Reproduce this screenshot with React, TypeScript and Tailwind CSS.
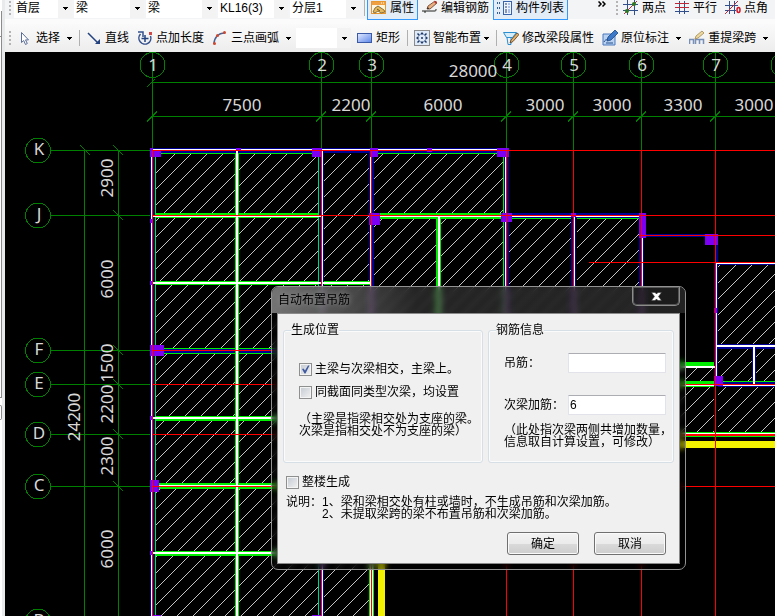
import React from "react";

const FONT = "font-['Liberation_Sans','Noto_Sans_CJK_SC',sans-serif]";

/* ---------- toolbar pieces ---------- */

function Icon({ children }: { children: React.ReactNode }) {
  return (
    <svg width="16" height="16" viewBox="0 0 16 16" fill="none" aria-hidden="true" className="shrink-0">
      {children}
    </svg>
  );
}

function Grip() {
  return (
    <span aria-hidden="true" className="flex w-[3px] shrink-0 flex-col gap-[2px]">
      <i className="h-[2px] w-[2px] bg-[#b4b4b4]" />
      <i className="h-[2px] w-[2px] bg-[#b4b4b4]" />
      <i className="h-[2px] w-[2px] bg-[#b4b4b4]" />
      <i className="h-[2px] w-[2px] bg-[#b4b4b4]" />
    </span>
  );
}

function Sep({ wide = false }: { wide?: boolean }) {
  return <span aria-hidden="true" className={`mr-[2px] h-4 w-px shrink-0 bg-[#b0b0b0] ${wide ? "ml-[5px]" : "ml-[3px]"}`} />;
}

function Triangle() {
  return (
    <svg width="5" height="3" viewBox="0 0 5 3" aria-hidden="true" shapeRendering="crispEdges">
      <path d="M0 0h5v1h-5zM1 1h3v1h-3zM2 2h1v1h-1z" fill="#000" />
    </svg>
  );
}

function Arrow({ label, tight = false }: { label: string; tight?: boolean }) {
  return (
    <button type="button" aria-label={label} className={`flex h-5 w-[10px] shrink-0 items-center justify-center ${tight ? "-ml-1" : ""}`}>
      <Triangle />
    </button>
  );
}

function Tool({ icon, text, on = false }: { icon: React.ReactNode; text: string; on?: boolean }) {
  return (
    <button
      type="button"
      className={`flex h-6 shrink-0 items-center gap-[3px] border px-[3px] ${on ? "border-[#3399ff] bg-[#e2edf8]" : "border-transparent"}`}
    >
      {icon}
      <span>{text}</span>
    </button>
  );
}

function Combo({ label, value, size }: { label: string; value: string; size: string }) {
  return (
    <label className={`relative flex h-5 shrink-0 bg-white ${size}`}>
      <select aria-label={label} className="w-full appearance-none bg-transparent pl-[2px] text-[12px] leading-5 outline-none">
        <option>{value}</option>
      </select>
      <span className="pointer-events-none absolute inset-y-0 right-0 flex w-[14px] items-center justify-center bg-[#f3f3f4]">
        <Triangle />
      </span>
    </label>
  );
}

const icons = {
  props: (
    <Icon>
      <rect x="0.5" y="1.5" width="14" height="12" fill="#fff6e0" stroke="#e8962e" />
      <path d="M1 2h13v3H1z" fill="#f0a040" />
      <path d="M10 3h1M12 3h1" stroke="#fff" />
      <path d="M2 12l2-4 3-2 6 4 1 2-4 1-3-2-3 2z" fill="#e6b95c" stroke="#6d5524" strokeWidth="0.8" />
      <path d="M6 9l3 2" stroke="#6d5524" />
    </Icon>
  ),
  editBar: (
    <Icon>
      <path d="M0 11h3v2M3 11h9c2 0 2 0 2-2" stroke="#222" />
      <path d="M5 9l1-3 7-5 2 2-7 6z" fill="#e8b080" stroke="#6b3a28" strokeWidth="0.8" />
      <path d="M12 2l2 2 1-2-1-1z" fill="#c03030" />
      <path d="M5 9l1-2 1 2z" fill="#222" />
    </Icon>
  ),
  list: (
    <Icon>
      <path d="M0 3h4M0 8h4M0 13h4" stroke="#3060a0" strokeWidth="2" strokeDasharray="1 1" />
      <rect x="6.5" y="1.5" width="8" height="13" fill="#eef4ff" stroke="#3a62a8" />
      <path d="M8 4h2M8 7h2M8 10h2M8 12h2" stroke="#203a70" />
      <path d="M11 4h2M11 7h2M11 10h2M11 12h2" stroke="#6c8cc8" />
    </Icon>
  ),
  twoPoint: (
    <Icon>
      <path d="M4.5 0v15M11.5 0v15M0 4.5h15M0 10.5h15" stroke="#34508c" />
      <path d="M1 14L14 1" stroke="#c02838" />
      <circle cx="4" cy="11" r="2" fill="#2c7a20" />
      <circle cx="11" cy="4" r="2" fill="#2c7a20" />
    </Icon>
  ),
  parallel: (
    <Icon>
      <path d="M5.5 1v13M10.5 1v13M1 11.5h14" stroke="#34508c" />
      <path d="M1 3.5h14M1 7.5h14" stroke="#c02838" />
    </Icon>
  ),
  pointAngle: (
    <Icon>
      <path d="M4.5 1v13M9.5 1v13M0 5.5h13M0 10.5h11" stroke="#34508c" />
      <path d="M0 14L13 1" stroke="#c02838" />
      <ellipse cx="13.5" cy="10" rx="1.5" ry="2.5" stroke="#d01828" strokeWidth="1.5" />
    </Icon>
  ),
  cursor: (
    <Icon>
      <path d="M4.5 2.5v10l2.2-2 1.8 4 1.8-1-1.8-3.6h3z" fill="#fff" stroke="#5a6e98" />
    </Icon>
  ),
  line: (
    <Icon>
      <path d="M2 3L12 13" stroke="#23427e" strokeWidth="1.5" />
      <path d="M14 9v5H9z" fill="#23427e" />
    </Icon>
  ),
  pointLen: (
    <Icon>
      <path d="M3.5 4A6 6 0 1 0 13.500 6" stroke="#34508c" strokeWidth="1.500" />
      <path d="M1 2h5v5" stroke="#34508c" strokeWidth="1.5" />
      <path d="M8 5v7M4.5 8.500h7" stroke="#23427e" strokeWidth="1.5" />
      <rect x="12" y="2" width="3" height="3" fill="#d04848" />
    </Icon>
  ),
  arc: (
    <Icon>
      <path d="M2 14C2 8 6 3 13 3" stroke="#4a628f" strokeWidth="1.5" />
      <circle cx="2.500" cy="13.500" r="1.5" fill="#d04830" />
      <circle cx="5.500" cy="5.500" r="1.5" fill="#d04830" />
      <circle cx="12.500" cy="2.500" r="1.5" fill="#d04830" />
    </Icon>
  ),
  rect: (
    <Icon>
      <defs>
        <linearGradient id="rectFill" x1="0" y1="0" x2="1" y2="1">
          <stop offset="0" stopColor="#e4ecff" />
          <stop offset="1" stopColor="#5c86ea" />
        </linearGradient>
      </defs>
      <rect x="0.5" y="3.5" width="14" height="9" fill="url(#rectFill)" stroke="#3a5aa8" />
    </Icon>
  ),
  smart: (
    <Icon>
      <rect x="1" y="1" width="14" height="14" fill="#dfeaf8" />
      <rect x="0.500" y="0.500" width="15" height="15" stroke="#222" strokeDasharray="1 1" />
      <path d="M8 2l2 2.500H6zM8 14l2-2.500H6zM2 8l2.500-2v4zM14 8l-2.500-2v4z" fill="#1c3766" />
      <path d="M3.500 3.500l2 2M12.500 3.500l-2 2M3.500 12.500l2-2M12.500 12.500l-2-2" stroke="#1c3766" strokeWidth="1.500" />
      <path d="M7 8h2M8 7v2" stroke="#1c3766" />
    </Icon>
  ),
  segment: (
    <Icon>
      <path d="M0.500 2.500h13l-4 5H3.500z" fill="#d5eefa" stroke="#2b8fd0" />
      <path d="M4 7.500l1 7h3v-7" stroke="#2b8fd0" />
      <path d="M7 13l1-3 6-7 2 1.500-6 7z" fill="#e8b060" stroke="#4c3b2a" strokeWidth="0.800" />
    </Icon>
  ),
  note: (
    <Icon>
      <path d="M1 4h12v11H1z" fill="#b9d2f2" stroke="#4a78bc" />
      <path d="M2 12c2-4 4-1 4-4M4 13h7" stroke="#24508c" />
      <path d="M5 11l1-4 7-7 3 3-7 7z" fill="#3c78c8" stroke="#1e4684" strokeWidth="0.800" />
    </Icon>
  ),
  span: (
    <Icon>
      <path d="M0.500 14V9.500h4V14M6.500 14V9.500h4V14M10.500 9.500h4V14" stroke="#7890b8" strokeWidth="1.500" />
      <path d="M6 9l1-3 6-5 2 2-6 5z" fill="#edd9a0" stroke="#a08850" strokeWidth="0.800" />
    </Icon>
  ),
};

/* ---------- floor plan ---------- */

type Box = [number, number, number, number];
const boxes = (list: Box[]) => list.map(([x, y, w, h]) => `M${x} ${y}h${w}v${h}h${-w}z`).join("");

const hatchDots = Array.from({ length: 16 }, (_, i) => `M${i} ${(24 - i) % 16}h1v1h-1z`).join("");

const HATCH: Box[] = [
  [156, 154, 162, 480],
  [324, 154, 45, 480],
  [374, 154, 129, 278],
  [509, 219, 62, 213],
  [577, 219, 62, 213],
  [644, 368, 70, 64],
  [718, 265, 82, 168],
];

const GREEN: Box[] = [
  [155, 153, 1, 480], [155, 153, 164, 1], [318, 153, 1, 480], [374, 153, 130, 1], [503, 153, 1, 280],
  [235, 153, 4, 480],
  [155, 213, 164, 5], [155, 281, 164, 4], [324, 281, 46, 4],
  [155, 348, 164, 1], [155, 353, 164, 1],
  [155, 416, 164, 5], [155, 483, 164, 6], [155, 551, 164, 5],
  [374, 213, 130, 6], [436, 216, 5, 150],
  [509, 218, 62, 1], [577, 218, 62, 1],
  [369, 434, 1, 200], [373, 434, 1, 200],
  [600, 362, 114, 4], [600, 381, 114, 6], [718, 381, 82, 1],
  [374, 432, 426, 1], [374, 436, 426, 1],
];

const BLUE: Box[] = [
  [150, 148, 1, 480], [153, 153, 2, 480],
  [150, 148, 358, 1], [153, 151, 351, 2],
  [319, 151, 2, 480], [323, 151, 1, 480],
  [369, 151, 1, 280], [372, 151, 2, 280],
  [504, 151, 1, 282], [507, 150, 2, 282],
  [155, 349, 164, 4],
  [509, 213, 130, 2], [509, 217, 130, 1],
  [571, 216, 2, 216], [575, 216, 1, 216],
  [639, 216, 2, 216], [643, 216, 1, 216],
  [646, 234, 72, 3], [716, 236, 2, 26],
  [714, 262, 1, 124], [716, 262, 2, 120], [718, 264, 82, 1],
  [718, 344, 82, 1], [718, 347, 82, 2], [752, 347, 1, 34], [755, 347, 1, 34],
  [718, 382, 82, 2], [718, 386, 82, 1],
];

const WHITE: Box[] = [
  [151, 149, 1, 480], [151, 149, 356, 1],
  [236, 151, 2, 480], [322, 151, 1, 480], [370, 151, 1, 480], [372, 434, 1, 200],
  [505, 151, 1, 282],
  [152, 216, 170, 1], [152, 282, 218, 2], [152, 417, 167, 2], [152, 485, 167, 1], [152, 552, 167, 2],
  [374, 216, 268, 1], [438, 217, 2, 149],
  [574, 216, 1, 216], [642, 216, 1, 216],
  [716, 263, 84, 1], [716, 263, 1, 121], [716, 345, 84, 2], [753, 347, 2, 37],
  [600, 366, 115, 2], [600, 385, 200, 1], [600, 433, 200, 1],
];

const PURPLE: Box[] = [
  [150, 148, 3, 9], [153, 150, 8, 7], [236, 148, 5, 3], [312, 148, 10, 9], [370, 148, 8, 9], [427, 148, 5, 4],
  [497, 148, 12, 9], [369, 213, 11, 12], [501, 213, 11, 9], [150, 219, 3, 4], [150, 281, 2, 4],
  [150, 345, 14, 11], [150, 416, 2, 4], [150, 551, 2, 4], [150, 480, 9, 12],
  [571, 213, 5, 4], [639, 213, 7, 25], [705, 234, 13, 11], [714, 308, 3, 5], [714, 376, 9, 10],
  [152, 615, 9, 8], [312, 615, 10, 8],
];

const RED: Box[] = [
  [152, 150, 1, 480], [152, 150, 650, 1], [152, 215, 650, 1], [152, 350, 168, 1], [152, 384, 650, 1],
  [152, 434, 650, 1], [152, 486, 650, 1], [321, 150, 1, 480], [371, 150, 1, 480], [506, 150, 1, 480],
  [573, 150, 1, 480], [641, 150, 1, 480], [715, 150, 1, 480],
  [639, 235, 160, 1], [589, 262, 210, 1], [600, 435, 200, 1],
];

const YELLOW: Box[] = [[378, 441, 7, 190], [378, 441, 422, 7]];

const COLS = [152, 321, 371, 506, 573, 641, 715];
const ROWS: [string, number][] = [["K", 150], ["J", 215], ["F", 350], ["E", 384], ["D", 434], ["C", 486], ["B", 621]];

const TOP_DIMS: [string, number, number][] = [
  ["28000", 473, 77], ["7500", 242, 111], ["2200", 351, 111], ["6000", 443, 111],
  ["3000", 545, 111], ["3000", 612, 111], ["3300", 683, 111], ["3000", 754, 111],
];
const SIDE_DIMS: [string, number, number][] = [
  ["2900", 113, 178], ["6000", 113, 279], ["1500", 113, 363], ["2200", 113, 404],
  ["2300", 113, 456], ["6000", 113, 549], ["24200", 80, 417],
];

function Plan() {
  return (
    <svg className="absolute inset-0 h-full w-full font-['Noto_Sans',sans-serif] text-[17px]" role="img" aria-label="梁平面图">
      <defs>
        <pattern id="hatch" width="16" height="16" patternUnits="userSpaceOnUse">
          <path d={hatchDots} fill="#c4c4c4" shapeRendering="crispEdges" />
        </pattern>
      </defs>
      <g transform="translate(-5 -52)">
        <g shapeRendering="crispEdges">
          <path d={boxes(HATCH)} fill="url(#hatch)" />
          <g fill="none" stroke="#008000">
            <path d="M152 82.500H900M152 116.500H900M84.500 150V900M118.500 150V900M147 87l8-8M80 145l10 10" />
            {COLS.map((x) => (
              <g key={x}>
                <path d={`M${x}.5 52V150M${x - 5} 121.500l10-10`} />
                <circle cx={x + 0.5} cy="65" r="12.500" />
              </g>
            ))}
            <circle cx="783.500" cy="65" r="12.500" />
            {ROWS.map(([name, y]) => (
              <g key={name}>
                <path d={`M51 ${y}.5H152M113 ${y - 5}l10 10`} />
                <circle cx="38" cy={y + 0.5} r="12.500" />
              </g>
            ))}
          </g>
          <path d={boxes(YELLOW)} fill="#f2f200" />
          <path d={boxes(BLUE)} fill="#000094" />
          <path d={boxes(GREEN)} fill="#00ee00" />
          <path d={boxes(WHITE)} fill="#fff" />
          <path d={boxes(PURPLE)} fill="#7c00f4" />
          <path d={boxes(RED)} fill="#f00" />
        </g>
        <g fill="#d8d8d8" textAnchor="middle">
          {COLS.map((x, i) => (
            <text key={x} x={x + 1} y="71">{i + 1}</text>
          ))}
          {ROWS.map(([name, y]) => (
            <text key={name} x="39" y={y + 5}>{name}</text>
          ))}
          {TOP_DIMS.map(([t, x, y]) => (
            <text key={t + x} x={x} y={y}>{t}</text>
          ))}
          {SIDE_DIMS.map(([t, x, y]) => (
            <text key={t + y} transform={`translate(${x} ${y}) rotate(-90)`}>{t}</text>
          ))}
        </g>
      </g>
    </svg>
  );
}

/* ---------- dialog ---------- */

function Check({ label, checked = false }: { label: string; checked?: boolean }) {
  return (
    <label className="flex h-4 items-center gap-[3px]">
      <span className="relative flex h-[13px] w-[13px]">
        <input
          type="checkbox"
          defaultChecked={checked}
          className="peer h-[13px] w-[13px] appearance-none border border-[#8e8f8f] bg-linear-to-br from-[#c4cad2] to-[#f2f2f2] shadow-[inset_0_0_0_1px_#f4f4f4]"
        />
        <svg viewBox="0 0 13 13" aria-hidden="true" className="pointer-events-none absolute inset-0 hidden h-[13px] w-[13px] peer-checked:block">
          <path d="M3 6l1.500-0.500 1.500 2L9 2.500h1.500L6.500 10.500H5.500z" fill="#3f5aa0" />
        </svg>
      </span>
      <span className="whitespace-nowrap">{label}</span>
    </label>
  );
}

function Group({ title, size, children }: { title: string; size: string; children: React.ReactNode }) {
  return (
    <fieldset className={`h-[141px] min-w-0 shrink-0 rounded-[3px] border border-[#d5dfe5] pl-[15px] shadow-[inset_0_0_0_1px_#fbfbfb] ${size}`}>
      <legend className="-ml-2 bg-[#f0f0f0] leading-4">{title}</legend>
      {children}
    </fieldset>
  );
}

function Field({ id, label, value }: { id: string; label: string; value: string }) {
  return (
    <div className="flex h-5 items-center">
      <label htmlFor={id} className="w-16 shrink-0">{label}</label>
      <input
        id={id}
        type="text"
        defaultValue={value}
        className="h-5 w-[98px] rounded-[1px] border border-[#e2e3ea] border-t-[#abadb3] bg-white px-px text-[12px] outline-none"
      />
    </div>
  );
}

function DialogButton({ children }: { children: React.ReactNode }) {
  return (
    <button
      type="button"
      className="h-[23px] w-[72px] rounded-[3px] border border-[#707070] bg-[linear-gradient(#f3f3f3_0%,#ebebeb_50%,#dadada_51%,#cdcdcd_100%)] shadow-[inset_0_0_0_1px_#fafafa]"
    >
      {children}
    </button>
  );
}

function HangerDialog() {
  return (
    <section
      role="dialog"
      aria-labelledby="dialog-title"
      className="absolute top-[234px] left-[266px] w-[415px] rounded-[7px] border border-[#929292] bg-black/35 px-[5px] pb-[5px] backdrop-blur-[3px]"
    >
      <header className="-mx-[5px] flex h-[26px] items-start justify-between rounded-t-[6px] bg-linear-to-r from-[#808080]/90 via-[#555]/40 via-35% to-[#3a3a3a]/60 pr-[5px]">
        <h1 id="dialog-title" className="pl-[6px] leading-[26px] text-black [text-shadow:0_0_6px_#aaa]">自动布置吊筋</h1>
        <button
          type="button"
          aria-label="关闭"
          className="flex h-[19px] w-[48px] items-center justify-center rounded-b-[5px] border border-t-0 border-[#8c8c8c] bg-black/20 shadow-[inset_0_0_0_1px_#555]"
        >
          <svg width="11" height="9" viewBox="0 0 11 9" aria-hidden="true">
            <path d="M0.500 0.500h3.500l1.500 1.500 1.500-1.500h3.500L7.500 4.500l3 4H7L5.500 7 4 8.500H0.500l3-4z" fill="#fff" stroke="#333" strokeWidth="0.500" />
          </svg>
        </button>
      </header>
      <form
        onSubmit={(e) => e.preventDefault()}
        className="border border-[#8a8a8a] bg-[#f0f0f0] bg-clip-padding pt-2 pb-2 leading-4 text-black"
      >
        <div className="flex gap-[5px] pl-[5px]">
          <Group title="生成位置" size="w-[200px]">
            <div className="flex flex-col gap-[7px] pt-[23px]">
              <Check label="主梁与次梁相交，主梁上。" checked />
              <Check label="同截面同类型次梁，均设置" />
            </div>
            <p className="mt-[13px] leading-3 whitespace-nowrap">
              （主梁是指梁相交处为支座的梁。
              <br />
              次梁是指相交处不为支座的梁）
            </p>
          </Group>
          <Group title="钢筋信息" size="w-[186px]">
            <div className="flex flex-col gap-[22px] pt-[15px]">
              <Field id="hanger" label="吊筋：" value="" />
              <Field id="extra" label="次梁加筋：" value="6" />
            </div>
            <p className="mt-[9px] leading-3 whitespace-nowrap">
              （此处指次梁两侧共增加数量，
              <br />
              信息取自计算设置，可修改）
            </p>
          </Group>
        </div>
        <div className="mt-[11px] pl-2">
          <Check label="整楼生成" />
          <div className="mt-[6px] flex leading-3">
            <span className="w-9">说明：</span>
            <p>
              1、梁和梁相交处有柱或墙时，不生成吊筋和次梁加筋。
              <br />
              2、未提取梁跨的梁不布置吊筋和次梁加筋。
            </p>
          </div>
        </div>
        <div className="mt-3 flex justify-end gap-[15px] pr-[13px]">
          <DialogButton>确定</DialogButton>
          <DialogButton>取消</DialogButton>
        </div>
      </form>
    </section>
  );
}

/* ---------- page ---------- */

export default function App() {
  return (
    <div className={`flex min-h-screen overflow-hidden bg-[#f0f0f0] text-[12px] text-black ${FONT}`}>
      <aside aria-hidden="true" className="flex w-[5px] shrink-0 flex-col border-r-[3px] border-[#e9eaec] bg-white">
        <div className="mt-[11px] h-[25px] border-r border-[#8c8c8c]" />
        <div className="h-[362px] border-y border-r border-[#8c8c8c]" />
        <div className="mt-[7px] h-[15px] rounded-r-[2px] border-y border-r border-[#8c8c8c]" />
      </aside>
      <main className="flex min-w-0 flex-1 flex-col">
        <div className="flex h-[52px] shrink-0 flex-col gap-[5px] overflow-hidden bg-[#fbfbfb] whitespace-nowrap">
          <div className="flex h-[19px] items-center bg-[#f3f4f5] pb-[3px] pl-[4px]">
            <Grip />
            <div className="ml-[2px] flex gap-[2px]">
              <Combo label="楼层" value="首层" size="w-[58px]" />
              <Combo label="构件类型" value="梁" size="w-[70px]" />
              <Combo label="构件" value="梁" size="w-[70px]" />
              <Combo label="名称" value="KL16(3)" size="w-[70px]" />
              <Combo label="分层" value="分层1" size="w-[70px]" />
            </div>
            <span className="ml-px flex items-center">
              <Sep />
            </span>
            <Tool icon={icons.props} text="属性" on />
            <Tool icon={icons.editBar} text="编辑钢筋" />
            <Tool icon={icons.list} text="构件列表" on />
            <button type="button" aria-label="更多" className="mr-[10px] ml-[30px] flex w-2 shrink-0 items-start pb-2">
              <svg width="8" height="6" viewBox="0 0 8 6" fill="none" stroke="#000" strokeWidth="1.500" aria-hidden="true">
                <path d="M0.500 0.500L3 3 0.500 5.500M4.500 0.500L7 3 4.500 5.500" />
              </svg>
            </button>
            <Grip />
            <Tool icon={icons.twoPoint} text="两点" />
            <Tool icon={icons.parallel} text="平行" />
            <Tool icon={icons.pointAngle} text="点角" />
          </div>
          <div className="flex h-7 items-center bg-linear-to-b from-[#fafafa] to-[#ededee] pl-[4px]">
            <Grip />
            <span className="ml-px flex items-center">
              <Tool icon={icons.cursor} text="选择" />
              <Arrow label="选择方式" />
            </span>
            <Sep wide />
            <Tool icon={icons.line} text="直线" />
            <Tool icon={icons.pointLen} text="点加长度" />
            <Tool icon={icons.arc} text="三点画弧" />
            <Arrow label="画弧方式" />
            <span className="mr-[2px] ml-[3px] flex">
              <Combo label="参数" value="" size="w-[55px]" />
            </span>
            <Tool icon={icons.rect} text="矩形" />
            <Sep />
            <Tool icon={icons.smart} text="智能布置" />
            <Arrow label="布置方式" tight />
            <Sep wide />
            <Tool icon={icons.segment} text="修改梁段属性" />
            <Tool icon={icons.note} text="原位标注" />
            <Arrow label="标注方式" />
            <span className="ml-[2px] flex items-center">
              <Tool icon={icons.span} text="重提梁跨" />
              <Arrow label="梁跨方式" />
            </span>
          </div>
        </div>
        <div className="relative flex-1 overflow-hidden bg-black">
          <Plan />
          <HangerDialog />
        </div>
      </main>
    </div>
  );
}
